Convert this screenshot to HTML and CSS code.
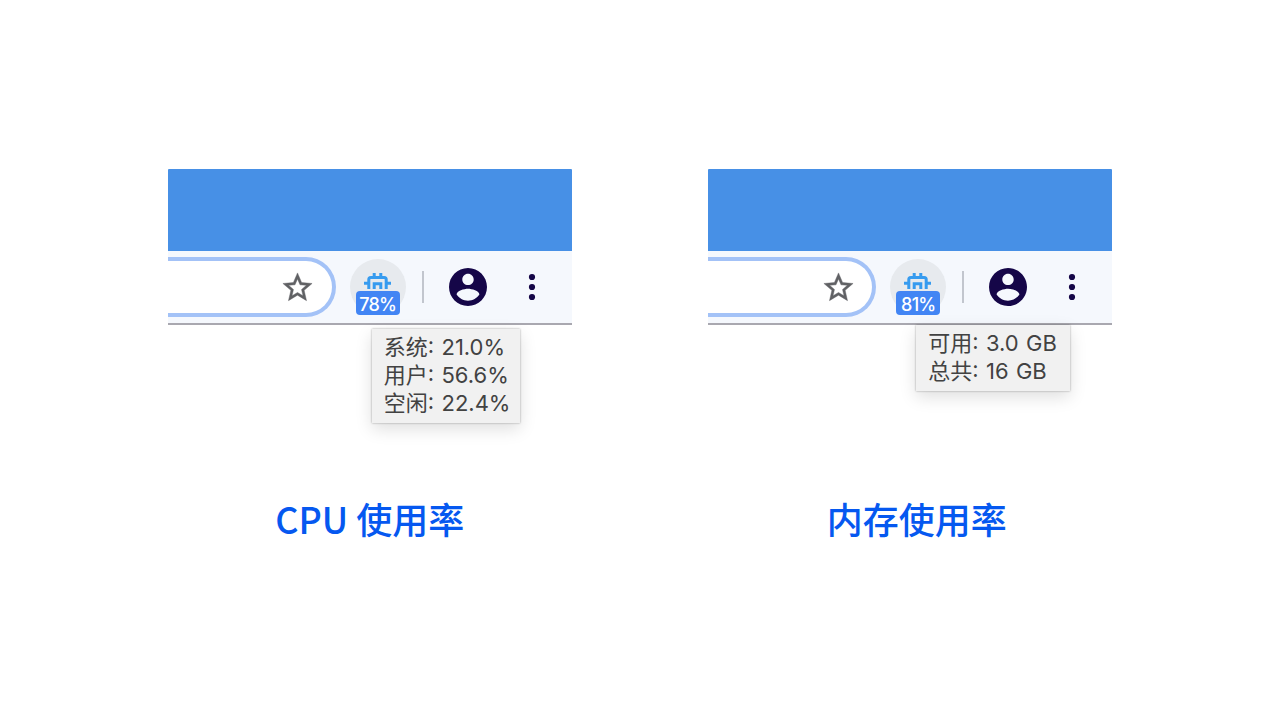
FILE: index.html
```html
<!DOCTYPE html>
<html lang="zh-CN">

<head>
    <meta charset="UTF-8">
    <meta name="viewport" content="width=device-width, initial-scale=1.0">
    <title>CPU / 内存使用率</title>
    <link rel="stylesheet" href="styles.css">
</head>

<body>
    <main class="features">
        <section class="feature">
            <div class="browser">
                <div class="tab-strip"></div>
                <div class="toolbar">
                    <div class="address-bar">
                        <svg class="star" viewBox="0 0 24 24"><path d="M22 9.24l-7.19-.62L12 2 9.19 8.63 2 9.24l5.46 4.73L5.82 21 12 17.27 18.18 21l-1.63-7.03L22 9.24zM12 15.4l-3.76 2.27 1-4.28-3.32-2.88 4.38-.38L12 6.1l1.71 4.04 4.38.38-3.32 2.88 1 4.28L12 15.4z"/></svg>
                    </div>
                    <div class="extension">
                        <svg class="chip" viewBox="0 0 30 20">
                            <path d="M5.8 16V6.5Q5.8 4.500 7.800 4.500H21.200Q23.200 4.500 23.200 6.500V16M11.200 0V4.500M17.800 0V4.500M1 10.200H5.800M23.200 10.200H28"/>
                            <path d="M11.200 16V10.800H17.800V16"/>
                        </svg>
                        <span class="badge">78%</span>
                    </div>
                    <div class="divider"></div>
                    <svg class="avatar" viewBox="2 2 20 20"><path d="M12 2C6.48 2 2 6.48 2 12s4.48 10 10 10 10-4.48 10-10S17.52 2 12 2zm0 3c1.66 0 3 1.34 3 3s-1.34 3-3 3-3-1.34-3-3 1.34-3 3-3zm0 14.2c-2.5 0-4.71-1.28-6-3.22.03-1.99 4-3.08 6-3.08 1.99 0 5.97 1.09 6 3.08-1.29 1.94-3.5 3.22-6 3.22z"/></svg>
                    <svg class="menu" viewBox="0 0 8 28"><circle cx="4" cy="4" r="3.1"/><circle cx="4" cy="14" r="3.1"/><circle cx="4" cy="24" r="3.1"/></svg>
                </div>
                <div class="tooltip tooltip-cpu">
                    <div>系统: 21.0%</div>
                    <div>用户: 56.6%</div>
                    <div>空闲: 22.4%</div>
                </div>
            </div>
            <h2 class="caption">CPU 使用率</h2>
        </section>

        <section class="feature">
            <div class="browser">
                <div class="tab-strip"></div>
                <div class="toolbar">
                    <div class="address-bar">
                        <svg class="star" viewBox="0 0 24 24"><path d="M22 9.24l-7.19-.62L12 2 9.19 8.63 2 9.24l5.46 4.73L5.82 21 12 17.27 18.18 21l-1.63-7.03L22 9.24zM12 15.4l-3.76 2.27 1-4.28-3.32-2.88 4.38-.38L12 6.1l1.71 4.04 4.38.38-3.32 2.88 1 4.28L12 15.4z"/></svg>
                    </div>
                    <div class="extension">
                        <svg class="chip" viewBox="0 0 30 20">
                            <path d="M5.8 16V6.5Q5.8 4.500 7.800 4.500H21.200Q23.200 4.500 23.200 6.500V16M11.200 0V4.500M17.800 0V4.500M1 10.200H5.800M23.200 10.200H28"/>
                            <path d="M11.200 16V10.800H17.800V16"/>
                        </svg>
                        <span class="badge">81%</span>
                    </div>
                    <div class="divider"></div>
                    <svg class="avatar" viewBox="2 2 20 20"><path d="M12 2C6.48 2 2 6.48 2 12s4.48 10 10 10 10-4.48 10-10S17.52 2 12 2zm0 3c1.66 0 3 1.34 3 3s-1.34 3-3 3-3-1.34-3-3 1.34-3 3-3zm0 14.2c-2.5 0-4.71-1.28-6-3.22.03-1.99 4-3.08 6-3.08 1.99 0 5.97 1.09 6 3.08-1.29 1.94-3.5 3.22-6 3.22z"/></svg>
                    <svg class="menu" viewBox="0 0 8 28"><circle cx="4" cy="4" r="3.1"/><circle cx="4" cy="14" r="3.1"/><circle cx="4" cy="24" r="3.1"/></svg>
                </div>
                <div class="tooltip tooltip-memory">
                    <div>可用: 3.0 GB</div>
                    <div>总共: 16 GB</div>
                </div>
            </div>
            <h2 class="caption caption-memory">内存使用率</h2>
        </section>
    </main>
</body>

</html>
```
FILE: styles.css
```css
* {
    box-sizing: border-box;
}

body {
    margin: 0;
    background-color: #fff;
    font-family: Inter, "Noto Sans CJK SC", sans-serif;
}

.features {
    display: flex;
    justify-content: center;
    gap: 136.5px;
    height: 720px;
    padding-top: 169px;
}

.feature {
    width: 404px;
}

.browser {
    position: relative;
    height: 323px;
}

.tab-strip {
    height: 82px;
    background-color: #4790e6;
    border-radius: 1px 1px 0 0;
}

.toolbar {
    display: flex;
    align-items: center;
    height: 74px;
    background-color: #f5f8fd;
    border-bottom: 2px solid #a9a8b0;
}

.address-bar {
    display: flex;
    align-items: center;
    justify-content: flex-end;
    width: 168px;
    height: 60px;
    padding-right: 16.5px;
    background-color: #fff;
    border: 4px solid #a3c2f7;
    border-left: 0;
    border-radius: 0 30px 30px 0;
}

.star {
    width: 35px;
    height: 35px;
    fill: #606164;
    stroke: #606164;
    stroke-width: 0.3;
}

.extension {
    position: relative;
    width: 56px;
    height: 56px;
    margin-left: 14px;
    padding: 14px 13px;
    border-radius: 50%;
    background-color: #e7eaee;
}

.chip {
    display: block;
    width: 30px;
    height: 20px;
    fill: none;
    stroke: #369bef;
    stroke-width: 3;
}

.badge {
    position: absolute;
    left: 6px;
    bottom: 0;
    width: 44px;
    height: 24px;
    border-radius: 4px;
    background-color: #4285f4;
    color: #fff;
    font-size: 18px;
    font-weight: 500;
    line-height: 28px;
    text-align: center;
    letter-spacing: -0.8px;
}

.divider {
    width: 2px;
    height: 32px;
    margin-left: 16px;
    background-color: #c2c6ce;
}

.avatar {
    width: 38px;
    height: 38px;
    margin-left: 25px;
    fill: #150648;
}

.menu {
    width: 8px;
    height: 28px;
    margin-left: 41px;
    fill: #150648;
}

.tooltip {
    position: absolute;
    padding: 4px 12px 6px;
    background-color: #f1f1f1;
    box-shadow: 0 0 2px rgba(0, 0, 0, 0.35), 0 6px 16px rgba(0, 0, 0, 0.13);
    color: #424242;
    font-size: 22px;
    line-height: 28px;
    white-space: nowrap;
    word-spacing: 1.2px;
}

.tooltip-cpu {
    top: 160px;
    left: 204px;
    width: 148px;
    height: 94px;
}

.tooltip-memory {
    top: 156px;
    left: 208px;
    width: 154px;
    height: 66px;
}

.caption {
    margin: 0;
    color: #0558f0;
    font-family: "Noto Sans CJK SC", sans-serif;
    font-size: 36px;
    font-weight: 500;
    line-height: 52px;
    text-align: center;
}

.caption-memory {
    padding-left: 13px;
}
```
